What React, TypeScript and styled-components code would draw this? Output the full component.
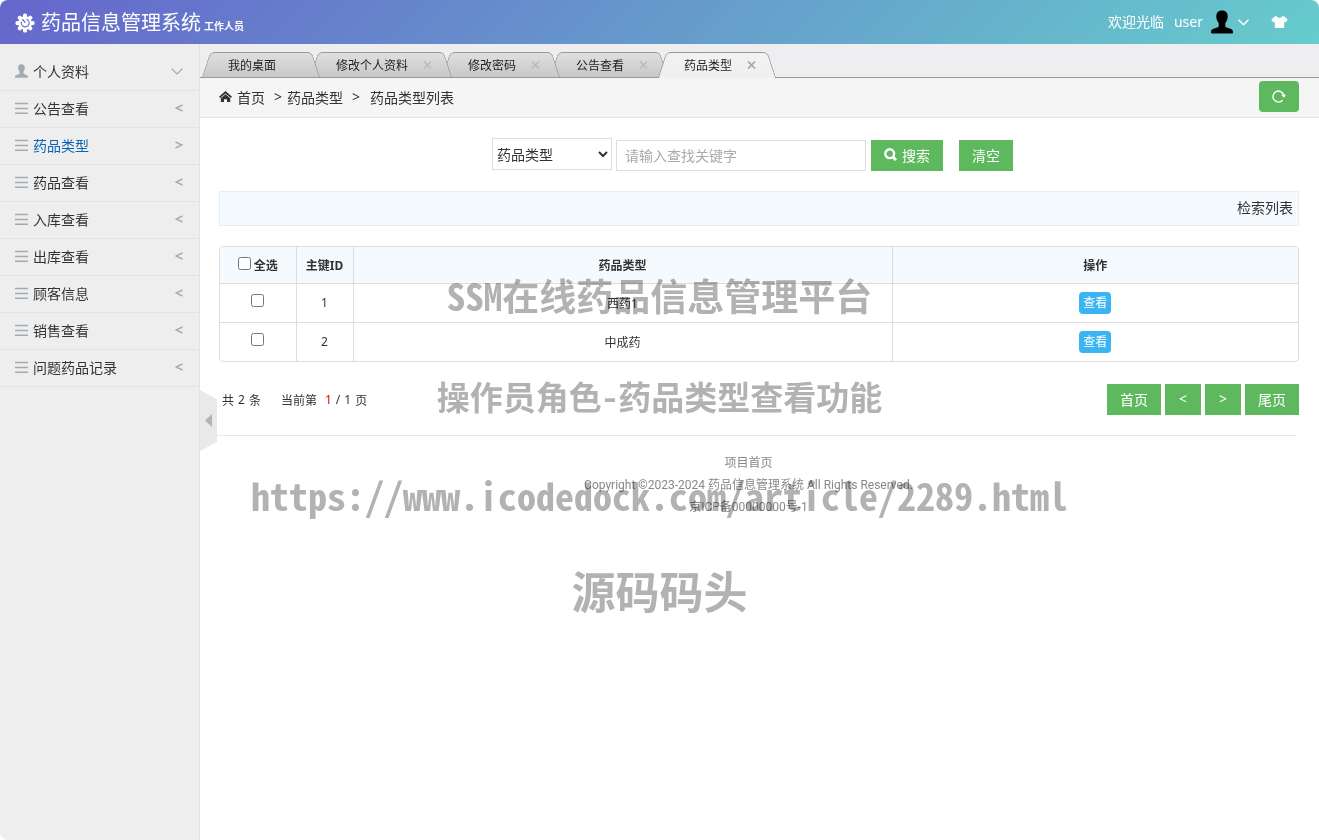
import React from 'react';
import styled, { createGlobalStyle, css } from 'styled-components';

const Global = createGlobalStyle`
  *, *::before, *::after { box-sizing: border-box; }
  html, body { margin: 0; padding: 0; background: #fff; }
  body, button, input, select {
    font-family: 'Noto Sans', 'Noto Sans CJK SC', sans-serif;
    font-size: 14px;
    color: #333;
  }
  a { color: inherit; text-decoration: none; }
`;

const Page = styled.div`
  position: relative;
  display: flex;
  flex-direction: column;
  min-height: 100vh;
  border-radius: 8px;
  overflow: hidden;
`;

const Header = styled.header`
  display: flex;
  align-items: center;
  height: 44px;
  padding: 0 31px 0 15px;
  color: #fff;
  background: linear-gradient(135deg, #6666cc, #66cccc);
`;

const Brand = styled.h1`
  display: flex;
  align-items: baseline;
  margin: 0 auto 0 6px;
  padding-top: 4px;
  font-size: 20px;
  font-weight: 400;
  line-height: 30px;
`;

const Role = styled.small`
  margin-left: 3px;
  font-size: 10px;
  font-weight: 700;
`;

const Welcome = styled.span`
  padding-bottom: 2px;
`;

const UserLink = styled.a`
  display: flex;
  align-items: center;
  gap: 5px;
  margin-left: 10px;
`;

const Avatar = styled.span`
  display: flex;
  margin-left: 3px;
  color: #000;
`;

const SkinButton = styled.button`
  display: flex;
  margin: 0 0 0 22px;
  padding: 0;
  border: 0;
  background: none;
  color: #fff;
`;

const Body = styled.div`
  display: flex;
  flex: 1;
`;

const Sidebar = styled.aside`
  flex: none;
  width: 200px;
  padding-top: 10px;
  background: #eeeeee;
  border-right: 1px solid #e3e3e3;
`;

const NavItem = styled.a<{ $active?: boolean }>`
  display: flex;
  align-items: center;
  gap: 5px;
  height: 37px;
  padding: 0 16px 2px 15px;
  border-bottom: 1px solid #e3e3e3;
  color: ${p => (p.$active ? '#0a64b4' : '#333')};
`;

const NavIcon = styled.span`
  display: flex;
  flex: none;
  width: 13px;
  color: #a3abb2;
`;

const NavArrow = styled.span`
  display: flex;
  margin-left: auto;
  color: #aaa;
`;

const Main = styled.main`
  position: relative;
  flex: 1;
  min-width: 0;
  background: #fff;
`;

const Tabs = styled.nav`
  display: flex;
  height: 34px;
  padding-top: 8px;
  background: #eeeef0;
  border-bottom: 1px solid #999;
`;

const tabEdge = css`
  content: '';
  position: absolute;
  z-index: -1;
  top: 0;
  bottom: 0;
  border-top: 1px solid #999;
`;

const Tab = styled.a<{ $active?: boolean; $order: number }>`
  position: relative;
  z-index: ${p => p.$order};
  isolation: isolate;
  display: flex;
  align-items: center;
  gap: 15px;
  min-width: 120px;
  height: ${p => (p.$active ? '26px' : '25px')};
  padding: 0 20px 0 28px;
  font-size: 12px;
  color: #222;
  & + & { margin-left: -12px; }
  &::before, &::after {
    ${tabEdge}
    background: ${p => (p.$active ? 'linear-gradient(#f2f2f2, #efefef)' : 'linear-gradient(#dedfdf, #c8c8c9)')};
  }
  &::before {
    left: 6px;
    right: 50%;
    border-left: 1px solid #999;
    border-top-left-radius: 5px;
    transform: skewX(-18deg);
  }
  &::after {
    left: 40%;
    right: 4px;
    border-right: 1px solid #999;
    border-top-right-radius: 5px;
    transform: skewX(18deg);
  }
`;

const CloseMark = styled.span<{ $active?: boolean }>`
  display: flex;
  color: ${p => (p.$active ? '#a0a4a8' : '#b4b8bb')};
`;

const Crumbs = styled.div`
  display: flex;
  align-items: center;
  height: 40px;
  padding: 0 20px 2px 19px;
  background: #f5f5f5;
  border-bottom: 1px solid #e5e5e5;
`;

const CrumbLink = styled.a`
  display: flex;
  align-items: center;
  gap: 5px;
`;

const Sep = styled.span<{ $wide?: boolean }>`
  padding: 0 ${p => (p.$wide ? '10px' : '5px')} 0 9px;
`;

const Button = styled.button<{ $w: number; $round?: boolean }>`
  display: flex;
  align-items: center;
  justify-content: center;
  gap: 5px;
  width: ${p => p.$w}px;
  height: 31px;
  padding: 0 0 2px;
  border: 0;
  border-radius: ${p => (p.$round ? '4px' : '0')};
  background: #5eb95e;
  color: #fff;
`;

const Push = styled.span`
  margin-left: auto;
`;

const Content = styled.div`
  padding: 20px 20px 0 19px;
`;

const Search = styled.form`
  display: flex;
  align-items: flex-end;
  justify-content: center;
  height: 33px;
  padding-right: 13px;
`;

const Select = styled.select`
  align-self: flex-start;
  width: 120px;
  height: 32px;
  margin-right: 4px;
  border: 1px solid #ddd;
  background: #fff;
`;

const TextInput = styled.input`
  width: 250px;
  height: 31px;
  margin-right: 5px;
  padding: 0 8px;
  border: 1px solid #ddd;
  &::placeholder { color: #aaa; }
`;

const Spacer = styled.span`
  width: 16px;
`;

const Toolbar = styled.div`
  display: flex;
  align-items: center;
  justify-content: flex-end;
  height: 35px;
  margin: 20px 0;
  padding: 0 5px 3px;
  background: #f5fafe;
  border: 1px solid #e8eef0;
`;

const TableFrame = styled.div`
  border: 1px solid #ddd;
  border-radius: 4px;
  overflow: hidden;
`;

const Table = styled.table`
  width: 100%;
  table-layout: fixed;
  border-collapse: collapse;
  font-size: 12px;
  text-align: center;
  th { height: 36px; background: #f5fafe; font-weight: 700; }
  td { height: 39px; }
  th, td { padding: 0; border: 1px solid #ddd; }
  tr > :first-child { border-left: 0; }
  tr > :last-child { border-right: 0; }
  thead th { border-top: 0; }
  tbody tr:last-child td { border-bottom: 0; }
`;

const Col = styled.col<{ $w?: string }>`
  width: ${p => p.$w || 'auto'};
`;

const CheckLabel = styled.label`
  display: flex;
  align-items: center;
  justify-content: center;
  gap: 3px;
`;

const Check = styled.input`
  display: block;
  width: 13px;
  height: 13px;
  margin: 0 auto 5px;
  ${CheckLabel} & { margin: 0 0 2px; }
`;

const ViewButton = styled.button`
  width: 32px;
  height: 22px;
  padding: 0;
  border: 0;
  border-radius: 4px;
  background: #3bb4f2;
  color: #fff;
  font-size: 12px;
  line-height: 22px;
  vertical-align: middle;
`;

const Pager = styled.div`
  display: flex;
  align-items: center;
  gap: 4px;
  margin-top: 22px;
  padding-left: 3px;
`;

const Count = styled.p`
  display: flex;
  gap: 20px;
  margin: 0 auto 0 0;
  font-size: 12px;
`;

const Words = styled.span`
  display: flex;
  gap: 4px;
`;

const Current = styled.span`
  margin-left: 4px;
  color: #e00;
`;

const Footer = styled.footer`
  margin: 20px 22px 0 0;
  padding-top: 16px;
  border-top: 1px solid #e8e8e8;
  color: #888;
  font-size: 12px;
  line-height: 22px;
  text-align: center;
  p { margin: 0; }
`;

const Copyright = styled.p`
  font-family: Roboto, 'Noto Sans CJK SC', sans-serif;
`;

const Handle = styled.button`
  position: absolute;
  z-index: 10;
  left: 0;
  top: 346px;
  display: flex;
  align-items: center;
  width: 17px;
  height: 61px;
  padding: 0 0 0 5px;
  border: 0;
  background: #e9e9e9;
  color: #b3b3b3;
  clip-path: polygon(0 0, 100% 15%, 100% 85%, 0 100%);
`;

const Watermark = styled.div<{ $size: number; $top: number }>`
  position: absolute;
  left: 0;
  right: 0;
  top: ${p => p.$top}px;
  font-family: 'Noto Sans Mono CJK SC', 'Noto Sans CJK SC', monospace;
  font-size: ${p => p.$size}px;
  font-weight: 700;
  line-height: 50px;
  text-align: center;
  white-space: nowrap;
  color: #b2b2b2;
  mix-blend-mode: multiply;
  pointer-events: none;
`;

const PersonIcon = ({ w, h }: { w: number; h: number }) => (
  <svg width={w} height={h} viewBox="0 0 22 24" preserveAspectRatio="none" fill="currentColor">
    <path d="M11 .5c3.800 0 5.700 2.300 5.700 6 0 3-1.200 5-2.400 6.400v3.100c0 .8.6 1.100 1.500 1.400l3.600 1.400c1.800.7 2.600 1.700 2.600 3.400 0 .8-.5 1.300-1.300 1.300H1.300C.5 23.500 0 23 0 22.200c0-1.700.8-2.700 2.600-3.400l3.600-1.400c.9-.3 1.500-.6 1.500-1.400v-3.100C6.500 11.500 5.300 9.500 5.300 6.500c0-3.700 1.900-6 5.700-6z" />
  </svg>
);

const GearIcon = () => (
  <svg width="20" height="21" viewBox="0 -1 20 21" fill="currentColor">
    {[0, 45, 90, 135, 180, 225, 270, 315].map(a => (
      <rect key={a} x="8" y="0.500" width="4" height="5" rx="1.500" transform={`rotate(${a} 10 10)`} />
    ))}
    <circle cx="10" cy="10" r="6.800" />
    <path d="M6.500 8.800a3.900 3.900 0 1 0 5-2.500" fill="none" stroke="#686fca" strokeWidth="1.200" />
    <path d="M7.300 6.300l3 3.200" fill="none" stroke="#686fca" strokeWidth="1.400" />
  </svg>
);

const Stroke = ({ w, h, d, sw = 1 }: { w: number; h: number; d: string; sw?: number }) => (
  <svg width={w} height={h} viewBox={`0 0 ${w} ${h}`} fill="none" stroke="currentColor" strokeWidth={sw}>
    <path d={d} />
  </svg>
);

const MenuIcon = () => <Stroke w={13} h={12} d="M0 1.500h13M0 6.500h13M0 11.200h13" sw={1.5} />;

const ShirtIcon = () => (
  <svg width="17" height="14" viewBox="0 0 17 14" fill="currentColor">
    <path d="M5.500 1C6.300 2.300 7.300 2.800 8.500 2.800s2.200-.5 3-1.800l1.800.4 3.400 3-1.900 3.100-1.600-.8V13H3.800V6.700l-1.600.8L.3 4.400l3.400-3z" />
  </svg>
);

const HomeIcon = () => (
  <svg width="13" height="11" viewBox="0 0 13 11" fill="currentColor">
    <path d="M6.500 0L13 5.700l-1.100 1.300L6.500 2.400 1.100 7 0 5.700z" />
    <path d="M6.500 3.200L11.200 7.200V11H8V8.200H5V11H1.800V7.200z" />
  </svg>
);

const RefreshIcon = () => (
  <svg width="14" height="14" viewBox="0 0 14 14" fill="none" stroke="currentColor" strokeWidth="1.400">
    <path d="M10.600 11.300A5.500 5.500 0 1 1 11.800 6" />
    <path d="M9 5.800h5l-2 3z" fill="currentColor" stroke="none" />
  </svg>
);

const SearchIcon = () => (
  <svg width="13" height="13" viewBox="0 0 13 13" fill="none" stroke="currentColor">
    <circle cx="5.700" cy="5.700" r="4.400" strokeWidth="2.400" />
    <path d="M8.500 8.500l3.500 3.500" strokeWidth="3" />
  </svg>
);

const menu = ['公告查看', '药品类型', '药品查看', '入库查看', '出库查看', '顾客信息', '销售查看', '问题药品记录'];
const tabs = ['我的桌面', '修改个人资料', '修改密码', '公告查看', '药品类型'];
const rows = [
  { id: 1, name: '西药1' },
  { id: 2, name: '中成药' },
];

export default function App() {
  return (
    <>
      <Global />
      <Page>
        <Header>
          <GearIcon />
          <Brand>药品信息管理系统<Role>工作人员</Role></Brand>
          <Welcome>欢迎光临</Welcome>
          <UserLink href="#">
            <Welcome>user</Welcome>
            <Avatar><PersonIcon w={22} h={24} /></Avatar>
            <Stroke w={11} h={7} d="M.5.8l5 5 5-5" sw={1.5} />
          </UserLink>
          <SkinButton type="button" aria-label="换肤"><ShirtIcon /></SkinButton>
        </Header>
        <Body>
          <Sidebar>
            <NavItem href="#">
              <NavIcon><PersonIcon w={14} h={14} /></NavIcon>
              个人资料
              <NavArrow><Stroke w={12} h={7} d="M.5.5l5.500 5.500L11.500.5" sw={1.2} /></NavArrow>
            </NavItem>
            {menu.map(name => {
              const active = name === '药品类型';
              return (
                <NavItem href="#" key={name} $active={active}>
                  <NavIcon><MenuIcon /></NavIcon>
                  {name}
                  <NavArrow>
                    <Stroke w={8} h={8} d={active ? 'M.5 1l6.500 3L.5 7' : 'M7.500 1L1 4l6.500 3'} sw={1.4} />
                  </NavArrow>
                </NavItem>
              );
            })}
          </Sidebar>
          <Main>
            <Tabs>
              {tabs.map((name, i) => {
                const active = i === tabs.length - 1;
                return (
                  <Tab href="#" key={name} $active={active} $order={active ? 9 : 8 - i}>
                    {name}
                    {i > 0 && <CloseMark $active={active}><Stroke w={9} h={8} d="M1 .5l7 7M8 .5l-7 7" sw={active ? 1.6 : 1.1} /></CloseMark>}
                  </Tab>
                );
              })}
            </Tabs>
            <Crumbs>
              <CrumbLink href="#"><HomeIcon />首页</CrumbLink>
              <Sep>&gt;</Sep>
              <span>药品类型</span>
              <Sep $wide>&gt;</Sep>
              <span>药品类型列表</span>
              <Push><Button type="button" $w={40} $round aria-label="刷新"><RefreshIcon /></Button></Push>
            </Crumbs>
            <Content>
              <Search onSubmit={e => e.preventDefault()}>
                <Select aria-label="查找字段"><option>药品类型</option></Select>
                <TextInput type="text" aria-label="关键字" placeholder="请输入查找关键字" />
                <Button type="submit" $w={72}><SearchIcon />搜索</Button>
                <Spacer />
                <Button type="reset" $w={54}>清空</Button>
              </Search>
              <Toolbar>检索列表</Toolbar>
              <TableFrame>
                <Table>
                  <colgroup><Col $w="76px" /><Col $w="57px" /><Col $w="50%" /><Col /></colgroup>
                  <thead>
                    <tr>
                      <th><CheckLabel><Check type="checkbox" />全选</CheckLabel></th>
                      <th>主键ID</th>
                      <th>药品类型</th>
                      <th>操作</th>
                    </tr>
                  </thead>
                  <tbody>
                    {rows.map(r => (
                      <tr key={r.id}>
                        <td><Check type="checkbox" aria-label={r.name} /></td>
                        <td>{r.id}</td>
                        <td>{r.name}</td>
                        <td><ViewButton type="button">查看</ViewButton></td>
                      </tr>
                    ))}
                  </tbody>
                </Table>
              </TableFrame>
              <Pager>
                <Count>
                  <Words><span>共</span><span>2</span><span>条</span></Words>
                  <Words><span>当前第</span><Current>1</Current><span>/</span><span>1</span><span>页</span></Words>
                </Count>
                <Button type="button" $w={54}>首页</Button>
                <Button type="button" $w={36}>&lt;</Button>
                <Button type="button" $w={36}>&gt;</Button>
                <Button type="button" $w={54}>尾页</Button>
              </Pager>
            </Content>
            <Footer>
              <p><a href="#">项目首页</a></p>
              <Copyright>Copyright ©2023-2024 药品信息管理系统 All Rights Reserved.</Copyright>
              <Copyright>京ICP备00000000号-1</Copyright>
            </Footer>
            <Handle type="button" aria-label="收起菜单">
              <svg width="7" height="13" viewBox="0 0 7 13" fill="currentColor"><path d="M7 0v13L0 6.500z" /></svg>
            </Handle>
          </Main>
        </Body>
        <Watermark $size={37} $top={270}>SSM在线药品信息管理平台</Watermark>
        <Watermark $size={33} $top={371}>操作员角色-药品类型查看功能</Watermark>
        <Watermark $size={38} $top={470}>https://www.icodedock.com/article/2289.html</Watermark>
        <Watermark $size={44} $top={565}>源码码头</Watermark>
      </Page>
    </>
  );
}
